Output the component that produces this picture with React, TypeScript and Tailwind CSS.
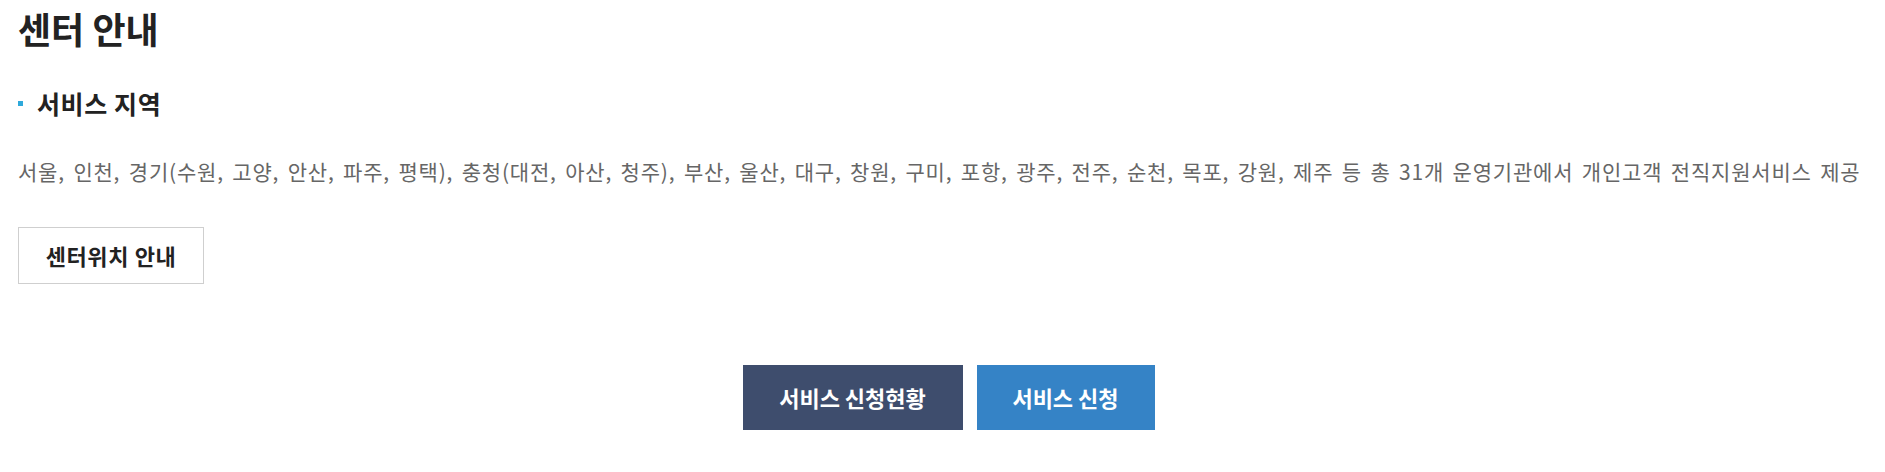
import React from "react";

const regions =
  "서울, 인천, 경기(수원, 고양, 안산, 파주, 평택), 충청(대전, 아산, 청주), 부산, 울산, 대구, 창원, 구미, 포항, 광주, 전주, 순천, 목포, 강원, 제주 등 총 31개 운영기관에서 개인고객 전직지원서비스 제공";

export default function App() {
  return (
    <div
      className="w-full bg-white"
      style={{ fontFamily: '"Noto Sans CJK KR", "Noto Sans", sans-serif' }}
    >
      <div className="px-[18px] pt-[4px]">
        <h1 className="text-[36px] font-bold leading-[48px] text-[#222]">센터 안내</h1>

        <h2 className="mt-[35px] flex items-center text-[25px] font-bold leading-[32px] tracking-[0.6px] text-[#222]">
          <span className="mr-[14px] h-[5px] w-[5px] bg-[#2ea9db]" />
          서비스 지역
        </h2>

        <p className="mt-[38px] whitespace-nowrap text-[21px] leading-[28px] tracking-[0.8px] [word-spacing:3px] text-[#666]">
          {regions}
        </p>

        <button className="mt-[42px] h-[57px] w-[186px] border border-[#cfcfcf] bg-white text-[22px] font-bold tracking-[0.6px] text-[#222]">
          센터위치 안내
        </button>
      </div>

      <div className="mt-[81px] flex justify-center gap-[14px] pl-[12px]">
        <button className="h-[65px] w-[220px] bg-[#3e4d6d] text-[22px] font-bold text-white">
          서비스 신청현황
        </button>
        <button className="h-[65px] w-[178px] bg-[#3583c6] text-[22px] font-bold text-white">
          서비스 신청
        </button>
      </div>
    </div>
  );
}
